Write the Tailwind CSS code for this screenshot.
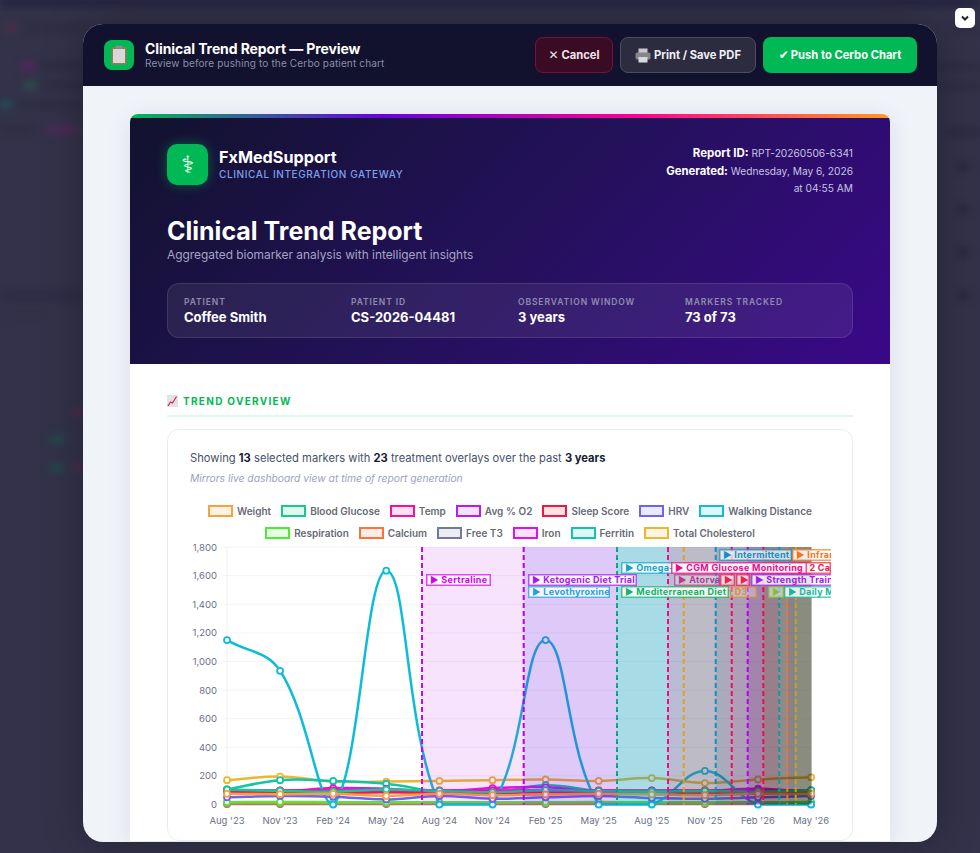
<!DOCTYPE html>
<html lang="en">
<head>
<meta charset="UTF-8">
<title>Clinical Trend Report — Preview</title>
<script src="https://cdn.jsdelivr.net/npm/@tailwindcss/browser@4"></script>
</head>
<body class="bg-[#33324a] font-['Inter',sans-serif] overflow-hidden">
<div class="relative w-[980px] h-[853px] overflow-hidden">

  <!-- blurred dashboard behind the modal -->
  <div class="absolute inset-0 blur-[4px]">
    <div class="h-[5px] bg-[#1a1838]"></div>
    <div class="absolute left-[7px] top-[25px] w-[10px] h-[6px] bg-[#5c2c48] rounded"></div>
    <div class="absolute left-[25px] top-[26px] w-[60px] h-[4px] bg-[#28283c]"></div>
    <div class="absolute left-[22px] top-[63px] w-[12px] h-[7px] bg-[#6a1f63] rounded"></div>
    <div class="absolute left-[40px] top-[64px] w-[45px] h-[4px] bg-[#28283c]"></div>
    <div class="absolute left-[24px] top-[82px] w-[12px] h-[7px] bg-[#2a5a48] rounded"></div>
    <div class="absolute left-[42px] top-[83px] w-[45px] h-[4px] bg-[#28283c]"></div>
    <div class="absolute left-0 top-[101px] w-[12px] h-[7px] bg-[#1f5560] rounded"></div>
    <div class="absolute left-[18px] top-[103px] w-[67px] h-[4px] bg-[#28283c]"></div>
    <div class="absolute left-0 top-[127px] w-[34px] h-[4px] bg-[#28283c]"></div>
    <div class="absolute left-[46px] top-[126px] w-[32px] h-[7px] bg-[#55285a] rounded"></div>
    <div class="absolute left-0 top-[294px] w-[84px] h-[4px] bg-[#2a2440]"></div>
    <div class="absolute left-[10px] top-[314px] w-[35px] h-[3px] bg-[#2c2c42]"></div>
    <div class="absolute left-[74px] top-[409px] w-[10px] h-[7px] bg-[#5c2c48] rounded"></div>
    <div class="absolute left-[50px] top-[435px] w-[14px] h-[8px] bg-[#1f5148] rounded"></div>
    <div class="absolute left-[50px] top-[464px] w-[14px] h-[8px] bg-[#1f5148] rounded"></div>
    <div class="absolute left-[74px] top-[464px] w-[10px] h-[7px] bg-[#5c2c48] rounded"></div>
    <div class="absolute left-[945px] top-[27px] w-[35px] h-[3px] bg-[#28283c]"></div>
    <div class="absolute left-[937px] top-[65px] w-[43px] h-[4px] bg-[#28283c]"></div>
    <div class="absolute left-[937px] top-[84px] w-[43px] h-[4px] bg-[#28283c]"></div>
    <div class="absolute left-[945px] top-[130px] w-[35px] h-[4px] bg-[#24243a]"></div>
    <div class="absolute left-[957px] top-[164px] w-[12px] h-[5px] bg-[#20203a]"></div>
    <div class="absolute left-[957px] top-[207px] w-[12px] h-[5px] bg-[#20203a]"></div>
    <div class="absolute left-[957px] top-[250px] w-[12px] h-[5px] bg-[#20203a]"></div>
    <div class="absolute left-[957px] top-[293px] w-[12px] h-[5px] bg-[#20203a]"></div>
  </div>

  <button class="absolute left-[955px] top-[8px] w-[20px] h-[20px] bg-white rounded-[5px] flex items-center justify-center">
    <svg width="10" height="10" viewBox="0 0 10 10" fill="none" stroke="#222" stroke-width="2"><path d="M2 3.5 5 6.5 8 3.5"/></svg>
  </button>

  <!-- modal -->
  <div class="absolute left-[83px] top-[24px] w-[854px] h-[818px] rounded-[20px] overflow-hidden bg-[#f0f3f8] flex flex-col shadow-[0_0_40px_rgba(0,0,0,0.3)]">
    <header class="h-[62px] shrink-0 bg-[#12122e] flex items-center justify-between pl-[21px] pr-[20px]">
      <div class="flex items-center gap-[11px]">
        <div class="w-[30px] h-[30px] rounded-lg bg-[#00b955] flex items-center justify-center">
          <svg width="18" height="20" viewBox="0 0 18 20"><rect x="1.5" y="2" width="15" height="17.5" rx="1.5" fill="#9a7a55"/><rect x="3" y="4" width="12" height="14" fill="#d8d8d8"/><rect x="5.5" y="0.8" width="7" height="3" rx="1" fill="#8d8d8d"/></svg>
        </div>
        <div>
          <div class="text-[14px] leading-[16px] font-bold tracking-[-0.1px] text-white">Clinical Trend Report — Preview</div>
          <div class="text-[10px] leading-[13px] text-[#8a8da8] tracking-[0.15px]">Review before pushing to the Cerbo patient chart</div>
        </div>
      </div>
      <div class="flex gap-[7px] text-[11.2px] font-bold">
        <button class="w-[78px] h-[36px] rounded-lg bg-[#3a0c24] border border-[#7a0f3c] text-[#f0e4ea] flex items-center justify-center gap-[3px]"><span class="font-['DejaVu_Sans'] font-normal text-[12px]">✕</span>Cancel</button>
        <button class="w-[136px] h-[36px] rounded-lg bg-[#2c2b40] border border-[#4d4c60] text-[#f0f0f4] flex items-center justify-center gap-[3px]">
          <svg width="16" height="15" viewBox="0 0 16 15"><rect x="3.5" y="0.5" width="9" height="5" fill="#c8c8cc"/><rect x="0.5" y="4.5" width="15" height="7" rx="1.5" fill="#85858c"/><rect x="3.5" y="9" width="9" height="5.5" fill="#d8d8dc"/></svg>
          Print / Save PDF</button>
        <button class="w-[154px] h-[36px] rounded-lg bg-[#00b955] text-white flex items-center justify-center gap-[2px]"><span class="font-['DejaVu_Sans'] font-normal text-[12px]">✔</span>Push to Cerbo Chart</button>
      </div>
    </header>

    <main class="flex-1 overflow-hidden px-[47px] pt-[28px]">
      <div class="w-[760px] rounded-t-[8px] overflow-hidden bg-white shadow-[0_4px_24px_rgba(30,30,80,0.1)]">
        <div class="h-[4px] bg-[linear-gradient(90deg,#00b955,#6a00e0,#ff0090,#ff9a1a)]"></div>

        <section class="h-[246px] bg-[linear-gradient(135deg,#12122e_0%,#23115a_50%,#3a0888_100%)] px-[37px] pt-[26px]">
          <div class="flex justify-between h-[60px]">
            <div class="flex items-start gap-[11px]">
              <div class="w-[41px] h-[41px] rounded-[10px] bg-[#00b955] shadow-[0_0_12px_rgba(0,185,85,0.45)] flex items-center justify-center text-white text-[24px] font-['DejaVu_Sans']">⚕</div>
              <div class="pt-[3px]">
                <div class="text-[16.2px] leading-[20px] font-bold text-white">FxMedSupport</div>
                <div class="text-[10px] leading-[15px] font-medium tracking-[0.6px] text-[#7fa0ea]">CLINICAL INTEGRATION GATEWAY</div>
              </div>
            </div>
            <div class="text-right text-[10.2px] leading-[17.5px] text-[#c8c4e0] pt-[1px]">
              <div><b class="text-white text-[11.5px]">Report ID:</b> RPT-20260506-6341</div>
              <div><b class="text-white text-[11.3px]">Generated:</b> Wednesday, May 6, 2026</div>
              <div>at 04:55 AM</div>
            </div>
          </div>
          <h1 class="mt-[12px] text-[25px] leading-[30px] font-bold text-white">Clinical Trend Report</h1>
          <p class="mt-[1px] text-[11.9px] leading-[16px] text-[#a5a3c4]">Aggregated biomarker analysis with intelligent insights</p>
          <div class="mt-[20px] h-[55px] rounded-xl bg-white/[0.07] border border-white/[0.1] grid grid-cols-4 gap-4 px-4 pt-[13px]">
            <div><div class="text-[8.5px] leading-[11px] font-semibold tracking-[0.9px] text-[#8f8cae]">PATIENT</div><div class="text-[13px] leading-[18px] font-bold text-white">Coffee Smith</div></div>
            <div><div class="text-[8.5px] leading-[11px] font-semibold tracking-[0.9px] text-[#8f8cae]">PATIENT ID</div><div class="text-[13px] leading-[18px] font-bold text-white">CS-2026-04481</div></div>
            <div><div class="text-[8.5px] leading-[11px] font-semibold tracking-[0.9px] text-[#8f8cae]">OBSERVATION WINDOW</div><div class="text-[13px] leading-[18px] font-bold text-white">3 years</div></div>
            <div><div class="text-[8.5px] leading-[11px] font-semibold tracking-[0.9px] text-[#8f8cae]">MARKERS TRACKED</div><div class="text-[13px] leading-[18px] font-bold text-white">73 of 73</div></div>
          </div>
        </section>

        <section class="px-[37px] pt-[30px]">
          <div class="h-[23px] border-b-2 border-[#d9fbe8] flex items-start gap-[5px] text-[10px] leading-[15px] font-bold tracking-[1.3px] text-[#00b955]">
            <svg class="mt-[1px]" width="11" height="12" viewBox="0 0 11 12"><rect width="11" height="12" fill="#dfe3ea"/><path d="M1 11 3.5 7 5.5 8 9.5 1.5" fill="none" stroke="#dc2638" stroke-width="1.2"/></svg>
            TREND OVERVIEW
          </div>
          <div class="mt-[12px] h-[412px] rounded-xl border border-[#e8edf5] bg-white px-[22px] pt-[21px] relative overflow-hidden">
            <p class="text-[11.2px] leading-[14px] text-[#475069]">Showing <b class="text-[#161a33]">13</b> selected markers with <b class="text-[#161a33]">23</b> treatment overlays over the past <b class="text-[#161a33]">3 years</b></p>
            <p class="mt-[7px] text-[10.3px] leading-[13px] italic text-[#9aa3bd]">Mirrors live dashboard view at time of report generation</p>

            <div id="legend" class="mt-[15px] h-[44px] flex flex-wrap justify-center content-start text-[10px] leading-[22px] font-semibold text-[#666a75] gap-x-[10px]"></div>
            <svg id="chart" class="block -ml-[22px] -mt-[4px]" width="663" height="302" viewBox="167 540 663 302" font-family="Inter,sans-serif"></svg>
          </div>
        </section>
      </div>
    </main>
  </div>
</div>

<script>
const NS = 'http://www.w3.org/2000/svg'
const svg = document.getElementById('chart')
const X0 = 226, DX = 53.1, Y0 = 804.5, DY = 28.6 / 200

function el(name, attrs, text, parent) {
  const n = document.createElementNS(NS, name)
  for (const k in attrs) n.setAttribute(k, attrs[k])
  if (text) n.textContent = text
  ;(parent || svg).appendChild(n)
  return n
}
const px = i => X0 + i * DX
const py = v => Y0 - v * DY

const series = [
  ['Weight', '#f9a03f', [75,72,75,60,75,65,70,75,70,65,75,75]],
  ['Blood Glucose', '#14cb8f', [105,95,90,105,95,85,100,95,90,95,90,100]],
  ['Temp', '#ff0d90', [98,98,98,98,98,98,98,98,98,98,98,98]],
  ['Avg % O2', '#b81cf0', [97,97,97,97,97,97,97,97,97,97,97,97]],
  ['Sleep Score', '#f4163f', [85,80,80,85,80,80,85,80,85,80,80,80]],
  ['HRV', '#6c63f2', [50,60,55,35,60,40,50,60,45,40,50,60]],
  ['Walking Distance', '#0fbcd8', [1150,935,0,1635,0,0,1150,0,0,235,0,0]],
  ['Respiration', '#52e83a', [16,18,16,16,16,16,16,17,16,16,16,17]],
  ['Calcium', '#f9733a', [9,9,9,9,9,9,9,9,9,9,9,9]],
  ['Free T3', '#737a96', [3,3,3,3,3,3,3,3,3,3,3,3]],
  ['Iron', '#d815ee', [100,90,115,110,90,115,120,90,95,95,110,85]],
  ['Ferritin', '#12c4a8', [105,170,165,145,90,80,135,95,90,95,80,95]],
  ['Total Cholesterol', '#edb72b', [170,195,160,160,165,170,175,165,185,150,175,190]]
]

// legend
const legend = document.getElementById('legend')
series.forEach((s, i) => {
  const item = document.createElement('span')
  item.className = 'flex items-center gap-[4px]'
  const box = document.createElement('span')
  box.className = 'block w-[25px] h-[12px] border-2'
  box.style.borderColor = s[1]
  box.style.background = s[1] + '22'
  item.appendChild(box)
  item.appendChild(document.createTextNode(s[0]))
  legend.appendChild(item)
  if (i == 6) {
    const br = document.createElement('span')
    br.className = 'block w-full h-0'
    legend.appendChild(br)
  }
})

// grid and axes
for (let v = 0; v <= 1800; v += 200) {
  el('line', { x1: X0 - 4, x2: 811, y1: py(v), y2: py(v), stroke: '#f2f4f9' })
  el('text', { x: 216, y: py(v) + 3.5, 'text-anchor': 'end', 'font-size': 9.5, fill: '#6b7189' }, v.toLocaleString('en-US'))
}
el('line', { x1: X0, x2: X0, y1: 547, y2: 809, stroke: '#eef1f6' })
const months = ["Aug '23","Nov '23","Feb '24","May '24","Aug '24","Nov '24","Feb '25","May '25","Aug '25","Nov '25","Feb '26","May '26"]
months.forEach((m, i) => el('text', { x: px(i), y: 823.5, 'text-anchor': 'middle', 'font-size': 9.5, fill: '#6b7189' }, m))

// same control points as chart.js with tension 0.4
function spline(vals) {
  const pts = vals.map((v, i) => [px(i), py(v)])
  const cp = pts.map((p, i) => {
    const a = pts[i - 1] || p, c = pts[i + 1] || p
    const d1 = Math.hypot(p[0] - a[0], p[1] - a[1]), d2 = Math.hypot(c[0] - p[0], c[1] - p[1])
    const sum = d1 + d2 || 1
    const cap = y => Math.min(Y0, Math.max(547, y))
    return {
      prev: [p[0] - 0.4 * d1 / sum * (c[0] - a[0]), cap(p[1] - 0.4 * d1 / sum * (c[1] - a[1]))],
      next: [p[0] + 0.4 * d2 / sum * (c[0] - a[0]), cap(p[1] + 0.4 * d2 / sum * (c[1] - a[1]))]
    }
  })
  let d = 'M' + pts[0]
  for (let i = 0; i < pts.length - 1; i++) d += 'C' + cp[i].next + ' ' + cp[i + 1].prev + ' ' + pts[i + 1]
  return d
}
series.slice().reverse().forEach(s => {
  el('path', { d: spline(s[2]), fill: 'none', stroke: s[1], 'stroke-width': 2.5 })
  s[2].forEach((v, i) => el('circle', { cx: px(i), cy: py(v), r: 3, fill: '#fff', stroke: s[1], 'stroke-width': 1.8 }))
})

// treatment bands: [from, to, colour on white, how much of what lies under shows through]
const bands = [
  [421, 522.7, [247,227,252], .88], [522.7, 616, [223,201,249], .78], [616, 667, [169,219,230], .66], [667, 682.7, [185,188,210], .65],
  [682.7, 714.7, [189,187,198], .6], [714.7, 730.7, [169,171,189], .55], [730.7, 746.7, [174,158,182], .55], [746.7, 762.3, [162,132,173], .5],
  [762.3, 778.3, [151,128,137], .5], [778.3, 786.3, [143,138,142], .5], [786.3, 794.7, [135,131,138], .5], [794.7, 810.6, [138,140,128], .5]
]
bands.forEach(b => {
  const t = b[3]
  const c = b[2].map(v => Math.round((v - 255 * t) / (1 - t)))
  el('rect', { x: b[0], y: 547, width: b[1] - b[0], height: 257.5, fill: 'rgb(' + c + ')', 'fill-opacity': 1 - t })
})

const starts = [
  [421, '#d000f0'], [522.7, '#b400f0'], [616, '#1090b0'], [667, '#f00a8c'], [682.7, '#e0a020'], [714.7, '#1090c0'],
  [730.7, '#f00a60'], [746.7, '#b400f0'], [762.3, '#f00a50'], [778.3, '#0d9d90'], [786.3, '#f97316'], [794.7, '#c8a020']
]
starts.forEach(s => el('line', { x1: s[0], x2: s[0], y1: 547, y2: 804.5, stroke: s[1], 'stroke-width': 2, 'stroke-dasharray': '5 3' }))
el('line', { x1: 616, x2: 616, y1: 547, y2: 804.5, stroke: '#10b070', 'stroke-width': 2, 'stroke-dasharray': '3 5' })

// overlay labels, clipped at the canvas edge
const defs = el('defs', {})
const clip = el('clipPath', { id: 'edge' }, null, defs)
el('rect', { x: 167, y: 540, width: 663, height: 302 }, null, clip)
const labels = el('g', { 'clip-path': 'url(#edge)' })
const tags = [
  [425, 574, 65, 'Sertraline', '#d000f0', .85],
  [527, 586, 82, 'Levothyroxine', '#20a0dc', .85],
  [527, 574, 109, 'Ketogenic Diet Trial', '#a818ee', .85],
  [620, 562, 52, 'Omega-3', '#0ea5c8', .85],
  [680, 586, 76, 'Vitamin D3', '#d89030', .3],
  [620, 586, 108, 'Mediterranean Diet', '#12b46a', .85],
  [767, 562, 63, 'Zone 2 Cardio', '#f0204a', .85],
  [670, 562, 136, 'CGM Glucose Monitoring', '#f00a8c', .92],
  [673, 574, 46, 'Atorvastatin', '#b83a96', .25],
  [719, 574, 15, 'Magnesium', '#f0204a', .6],
  [735, 574, 14, 'Zinc', '#f0204a', .6],
  [750, 574, 90, 'Strength Training', '#a020e8', .8],
  [718, 549, 73, 'Intermittent Fasting', '#1090c0', .7],
  [791, 549, 60, 'Infrared Sauna', '#f97316', .85],
  [767, 586, 16, 'Yoga', '#80c040', .5],
  [783, 586, 70, 'Daily Meditation', '#12b8a0', .85]
]
tags.forEach((t, i) => {
  const g = el('g', {}, null, labels)
  const id = 'tag' + i
  const cp = el('clipPath', { id }, null, defs)
  el('rect', { x: t[0], y: t[1], width: t[2], height: 12 }, null, cp)
  el('rect', { x: t[0] + 0.75, y: t[1] + 0.75, width: t[2] - 1.5, height: 10.5, fill: '#fff', 'fill-opacity': t[5], stroke: t[4], 'stroke-opacity': .7, 'stroke-width': 1.5 }, null, g)
  el('text', { x: t[0] + 4, y: t[1] + 9, 'font-size': 9, 'font-weight': 700, 'letter-spacing': 0.3, fill: t[4], 'clip-path': 'url(#' + id + ')' }, '▶ ' + t[3], g)
})
</script>
</body>
</html>
